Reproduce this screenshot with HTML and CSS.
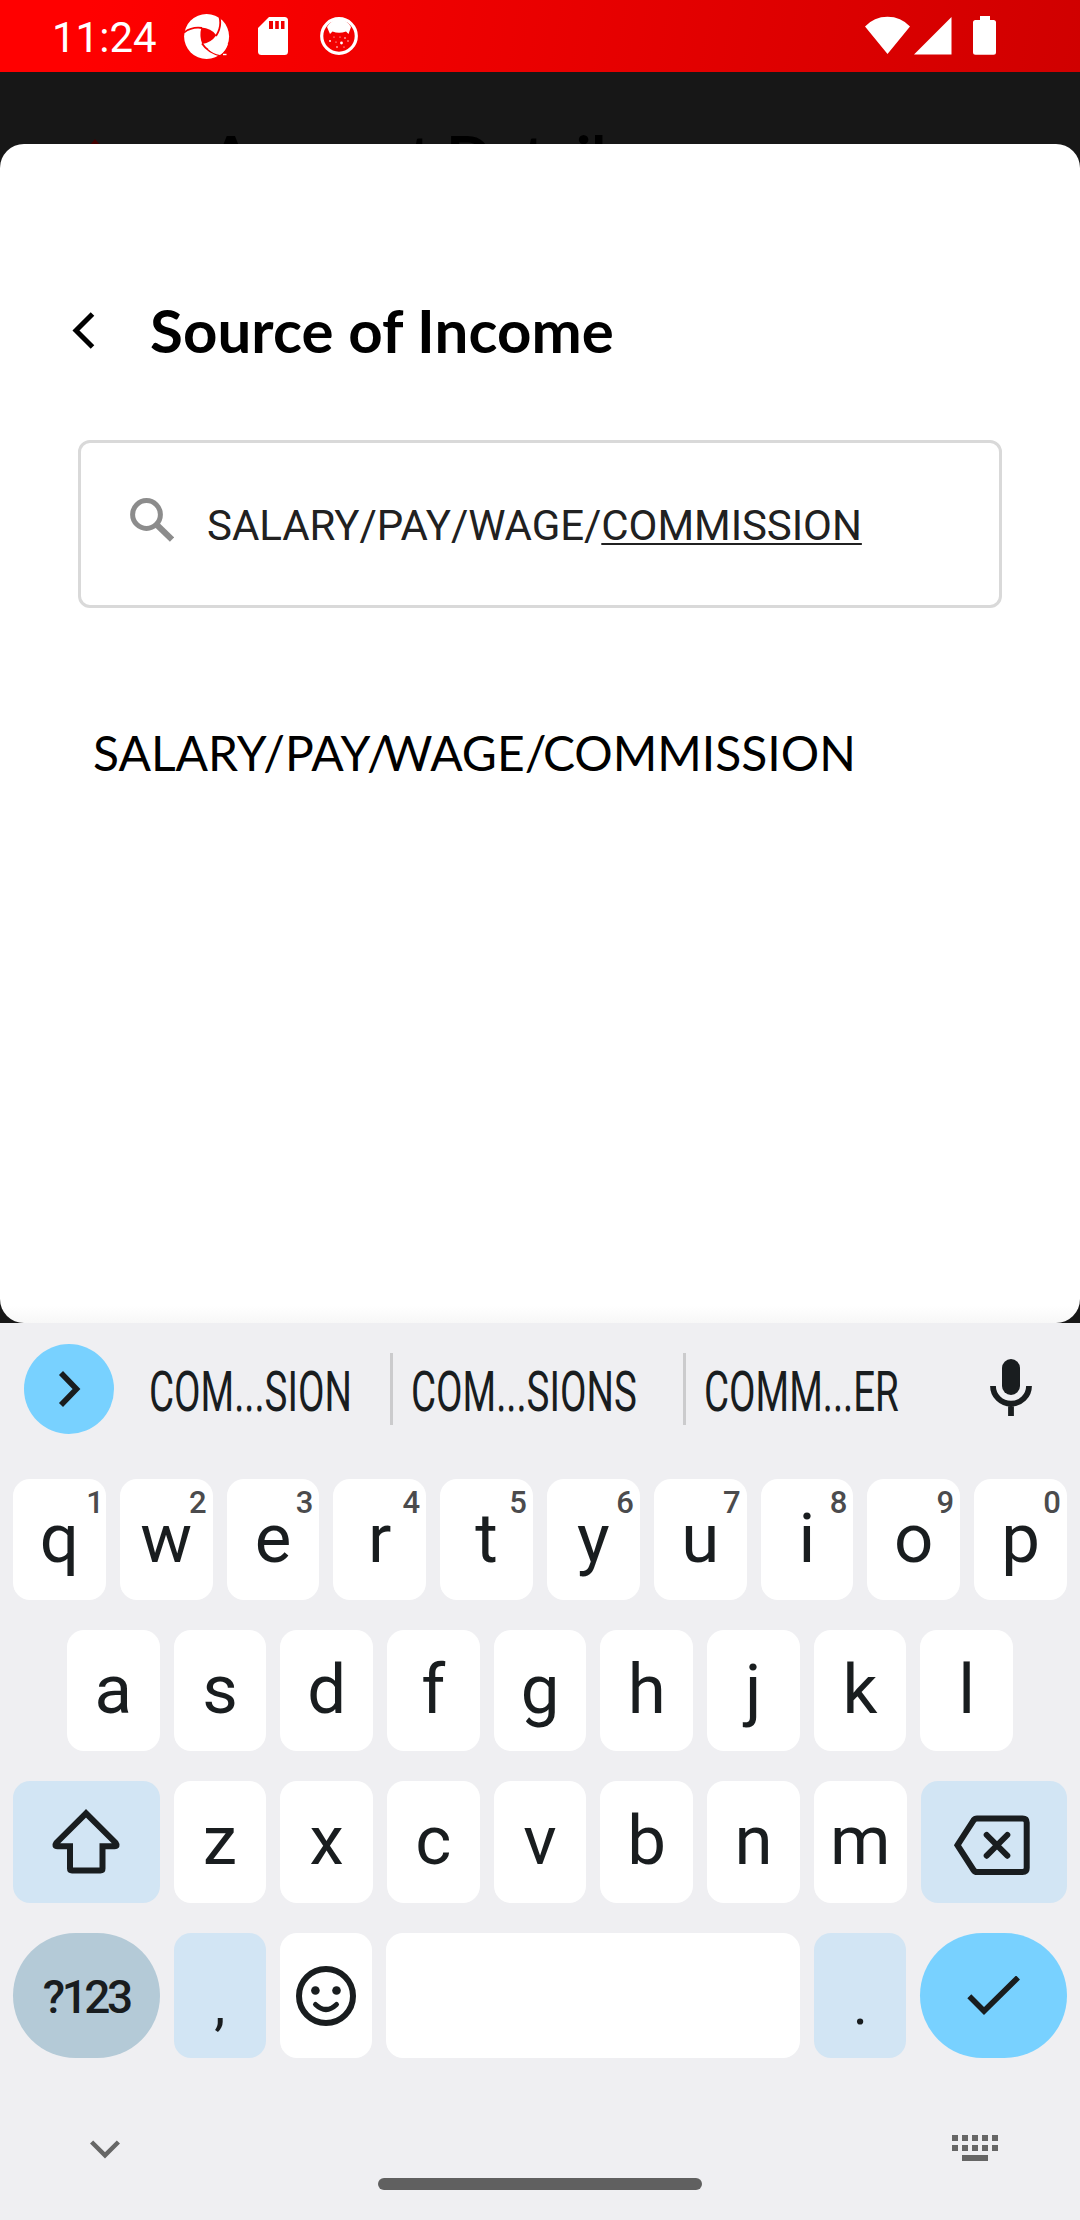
FILE: index.html
```html
<!DOCTYPE html>
<html lang="en">
<head>
<meta charset="utf-8">
<title>Source of Income</title>
<link rel="stylesheet" href="styles.css">
</head>
<body>
<div class="screen">
  <header class="status">
    <span class="clock">11:24</span>
    <svg class="s-swirl" width="46" height="46" viewBox="0 0 46 46">
      <circle cx="22.6" cy="22.5" r="22.5" fill="#fff"/>
      <path fill="#f40000" d="M17.4 13.6Q27 14 32.3 21.3Q27 29 18.3 30Q15 22 17.4 13.6z"/>
      <path fill="none" stroke="#f40000" stroke-width="1.8" d="M0 18.5Q8 12.500 18 14M35.500 3Q38 13 32 22M18 29.500Q24 39 38 42"/>
      <path fill="#f40000" d="M29 45L38 41L46 34V46H29z"/>
      <path fill="#fff" d="M30 34L44 30Q42 37 36 41Q29 40 24 35z"/>
      <path stroke="#fff" stroke-width="1.4" d="M39 40.500h3.500"/>
    </svg>
    <svg class="s-sd" width="30" height="38" viewBox="0 0 30 38">
      <path fill="#fff" d="M11 0H26.500Q30 0 30 3.500V34.500Q30 38 26.500 38H3.500Q0 38 0 34.500V11z"/>
      <path fill="#f00000" d="M11 4h4v8h-4zM17.200 4h3.600v8h-3.600zM23 4h3.500v8h-3.500z"/>
    </svg>
    <svg class="s-cat" width="38" height="38" viewBox="0 0 38 38">
      <circle cx="19" cy="19" r="17.300" fill="none" stroke="#fff" stroke-width="3.200"/>
      <path fill="#fff" d="M7 10Q12 2 19 2T31 10L28.500 17L26 14.500Q19 17 12.500 14.500L10 17z"/>
      <g fill="#fff"><circle cx="10" cy="24" r=".9"/><circle cx="16" cy="25" r=".6"/><circle cx="21.500" cy="26" r="1.400"/><circle cx="25" cy="21" r=".8"/><circle cx="28" cy="24" r=".7"/><circle cx="14" cy="20" r=".6"/><circle cx="20" cy="20" r=".6"/><circle cx="17" cy="30" r=".8"/><circle cx="24" cy="30" r=".6"/></g>
    </svg>
    <svg class="s-right" width="132" height="40" viewBox="865 16 132 40">
      <path fill="#fff" d="M865 26.500Q874 16.700 887.500 16.700T910 26.500L887.500 54zM914 54.500L951.500 17V54.500zM980 16h10v4h3.500q2.500 0 2.500 2.500v29.700q0 2.500-2.500 2.500h-18q-2.500 0-2.500-2.500v-29.700q0-2.500 2.500-2.500h4.500z"/>
    </svg>
  </header>
  <div class="behind">
    <svg class="behind-icon" width="20" height="24" viewBox="0 0 20 24"><path fill="#420000" d="M10 0L20 12H0z"/></svg>
    <span class="behind-title">Account Details</span>
  </div>
  <main class="sheet">
    <div class="title-row">
      <svg class="back" width="24" height="40" viewBox="0 0 24 40"><path fill="none" stroke="#000" stroke-width="5" d="M20.500 4L4 20.500L20.500 37"/></svg>
      <h1 class="title">Source of Income</h1>
    </div>
    <div class="search">
      <svg class="search-icon" width="44" height="44" viewBox="0 0 44 44"><g fill="none" stroke="#8c8c8c" stroke-width="5"><circle cx="16.500" cy="16.500" r="13.900"/><path stroke-width="6" d="M27 27L42 41.500"/></g></svg>
      <span class="query">SALARY/PAY/WAGE/<span class="composing">COMMISSION</span></span>
    </div>
    <div class="result">SALARY/PAY<span class="kern-w">/</span>WAGE<span class="kern-c">/</span>COMMISSION</div>
  </main>
  <section class="keyboard">
    <div class="suggestions">
      <div class="expand"><svg width="24" height="40" viewBox="0 0 24 40"><path fill="none" stroke="#191d1f" stroke-width="5.600" d="M4 4L19.500 20L4 36"/></svg></div>
      <div class="sug sug-1"><span>COM...SION</span></div>
      <div class="sug sug-2"><span>COM...SIONS</span></div>
      <div class="sug sug-3"><span>COMM...ER</span></div>
      <svg class="mic" width="44" height="58" viewBox="989 1359 44 58"><rect x="1002" y="1359" width="18" height="36" rx="9" fill="#191d1f"/><path fill="none" stroke="#191d1f" stroke-width="5.800" d="M993 1386a18 17.700 0 0 0 36 0M1011 1403v13"/></svg>
    </div>
    <div class="row">
      <div class="key">q<sup class="one">1</sup></div><div class="key">w<sup>2</sup></div><div class="key">e<sup>3</sup></div><div class="key">r<sup>4</sup></div><div class="key">t<sup>5</sup></div><div class="key">y<sup>6</sup></div><div class="key">u<sup>7</sup></div><div class="key">i<sup>8</sup></div><div class="key">o<sup>9</sup></div><div class="key">p<sup>0</sup></div>
    </div>
    <div class="row row-home">
      <div class="key">a</div><div class="key">s</div><div class="key">d</div><div class="key">f</div><div class="key">g</div><div class="key">h</div><div class="key">j</div><div class="key">k</div><div class="key">l</div>
    </div>
    <div class="row row-lower">
      <div class="key wide tint"><svg width="72" height="72" viewBox="50 1806 72 72"><path fill="none" stroke="#191d1f" stroke-width="6" stroke-linejoin="miter" d="M86 1813.300L56.300 1843Q54 1846.200 57.500 1846.200H70V1868.500Q70 1870.400 72 1870.400H100.500Q102.500 1870.400 102.500 1868.500V1846.200H114.500Q118 1846.200 115.700 1843z"/></svg></div>
      <div class="key">z</div><div class="key">x</div><div class="key">c</div><div class="key">v</div><div class="key">b</div><div class="key">n</div><div class="key">m</div>
      <div class="key wide tint"><svg class="erase" width="78" height="62" viewBox="953 1814 78 62"><path fill="none" stroke="#191d1f" stroke-width="6" d="M957.500 1845.200L973.500 1820.300Q974.800 1818.400 977 1818.400H1022.500Q1026.700 1818.400 1026.700 1822.500V1868Q1026.700 1872 1022.500 1872H977Q974.800 1872 973.500 1870z"/><path stroke="#191d1f" stroke-width="6" stroke-linecap="round" d="M986.700 1835L1007.300 1855.700M1007.300 1835L986.700 1855.700"/></svg></div>
    </div>
    <div class="row row-bottom">
      <div class="key wide pill symbols">?123</div>
      <div class="key tint punct">,</div>
      <div class="key"><svg width="60" height="60" viewBox="0 0 60 60"><circle cx="30" cy="30" r="27" fill="none" stroke="#191d1f" stroke-width="6"/><circle cx="19.400" cy="24.500" r="4.300" fill="#191d1f"/><circle cx="40.500" cy="24.500" r="4.300" fill="#191d1f"/><path fill="none" stroke="#191d1f" stroke-width="5" stroke-linecap="round" d="M19.500 38.500Q30 48.500 40.500 38.500"/></svg></div>
      <div class="key space"></div>
      <div class="key tint punct">.</div>
      <div class="key wide pill enter"><svg width="54" height="40" viewBox="967 1977 54 40"><path fill="none" stroke="#191d1f" stroke-width="5.600" d="M969.300 1997.300L984 2012L1018 1978.500"/></svg></div>
    </div>
    <footer class="navbar">
      <svg class="hide" width="30" height="20" viewBox="0 0 30 20"><path fill="none" stroke="#666" stroke-width="4.500" d="M1.600 2L15 15.400L28.400 2"/></svg>
      <div class="home"></div>
      <svg class="switch" width="46" height="26" viewBox="0 0 46 26"><path fill="#666" d="M0 0h6v6H0zM10 0h6v6h-6zM20 0h6v6h-6zM30 0h6v6h-6zM40 0h6v6h-6zM0 10h6v6H0zM10 10h6v6h-6zM20 10h6v6h-6zM30 10h6v6h-6zM40 10h6v6h-6zM10 20h26v6H10z"/></svg>
    </footer>
  </section>
</div>
</body>
</html>
```
FILE: styles.css
```css
* { box-sizing: border-box; }
body { margin: 0; background: #171717; }
svg { display: block; flex: none; }
.screen {
  width: 1080px;
  height: 2220px;
  display: flex;
  flex-direction: column;
  overflow: hidden;
  background: #171717;
  font-family: Roboto, "Liberation Sans", sans-serif;
}
.status {
  height: 72px;
  flex: none;
  display: flex;
  align-items: flex-start;
  padding-left: 52px;
  background: linear-gradient(100deg, #f00 0%, #f00 8%, #d00000 100%);
  color: #fff;
}
.clock { width: 132px; font-size: 42px; line-height: 75px; }
.s-swirl { margin-top: 14px; }
.s-sd { margin: 17px 0 0 28px; }
.s-cat { margin: 17px 0 0 32px; }
.s-right { margin: 16px 0 0 507px; }

/* Page header, mostly hidden under the sheet */
.behind {
  height: 72px;
  flex: none;
  display: flex;
  align-items: flex-start;
  overflow: hidden;
  padding-left: 85px;
}
.behind-icon { margin-top: 67px; }
.behind-title {
  margin-left: 105px;
  font: 700 60px/168px Lato, sans-serif;
  color: #000;
  white-space: nowrap;
}

.sheet {
  height: 1179px;
  flex: none;
  padding: 156px 78px 0;
  background: linear-gradient(#fff 0, #fff 1162px, #f7f7f7 1179px);
  border-radius: 24px;
}
.title-row { display: flex; align-items: center; height: 60px; }
.back { margin-left: -6px; }
.title {
  margin: 0 0 0 54px;
  font: 700 60px/60px Lato, sans-serif;
  letter-spacing: .08px;
  color: #000;
  white-space: nowrap;
}
.search {
  display: flex;
  align-items: flex-start;
  height: 168px;
  margin-top: 80px;
  padding: 55px 0 0 49px;
  border: 3px solid #d9d9d9;
  border-radius: 12px;
}
.query {
  margin: 3px 0 0 33px;
  font-size: 42px;
  line-height: 50px;
  letter-spacing: -.06px;
  color: #212121;
  white-space: nowrap;
}
.composing {
  text-decoration: underline;
  text-decoration-thickness: 2px;
  text-underline-offset: 3px;
  text-decoration-skip-ink: none;
}
.result {
  margin: 115px 0 0 15px;
  font: 400 48px/60px Lato, sans-serif;
  color: #000;
  white-space: nowrap;
}
.kern-w { margin-right: -6px; }
.kern-c { margin-right: -3.5px; }

.keyboard {
  flex: 1;
  display: flex;
  flex-direction: column;
  padding: 0 13px;
  background: #efeff2;
  color: #191d1f;
}
.suggestions { display: flex; height: 156px; padding: 21px 0 0 11px; }
.expand {
  width: 90px;
  height: 90px;
  display: flex;
  align-items: center;
  justify-content: center;
  border-radius: 50%;
  background: #78d1ff;
}
.sug {
  height: 72px;
  margin-top: 9px;
  font-size: 55px;
  line-height: 78px;
  white-space: nowrap;
}
.sug span { display: inline-block; transform: scaleX(.7); transform-origin: 0 50%; }
.sug-1 { width: 279px; padding-left: 35px; border-right: 3px solid #cbcbcd; }
.sug-2 { width: 293px; padding-left: 18px; border-right: 3px solid #cbcbcd; }
.sug-3 { width: 303px; padding-left: 18px; }
.mic { margin-top: 15px; }

.row { display: flex; gap: 14px; height: 121px; margin-bottom: 30px; flex: none; }
.row-home { padding: 0 54px; }
.row-lower { height: 122px; }
.row-bottom { height: 125px; margin-bottom: 0; }
.key {
  position: relative;
  flex: 1 1 0;
  min-width: 0;
  display: flex;
  align-items: flex-start;
  justify-content: center;
  border-radius: 17px;
  background: #fff;
  font-size: 69px;
  line-height: 119px;
}
.key svg { align-self: center; }
.key sup {
  position: absolute;
  top: 6px;
  right: 6px;
  font-size: 31px;
  font-weight: 500;
  line-height: 36px;
  color: #4b4b4d;
}
.key .one { right: 2px; }
.wide { flex: 0 0 146.500px; }
.tint { background: #d2e5f4; }
.erase { margin: 6px 3px 0 0; }
.pill { border-radius: 63px; }
.space { flex: 0 0 414px; }
.symbols {
  background: #b4cad7;
  font-size: 46px;
  font-weight: 500;
  line-height: 128px;
  letter-spacing: -3.500px;
}
.punct { font-size: 56px; line-height: 145px; }
.enter { background: #78d1ff; }

.navbar { display: flex; align-items: flex-start; padding-left: 77px; }
.hide { margin-top: 82px; }
.home { width: 324px; height: 12px; margin: 120px 0 0 258px; border-radius: 6px; background: #606060; }
.switch { margin: 77px 0 0 250px; }
```
